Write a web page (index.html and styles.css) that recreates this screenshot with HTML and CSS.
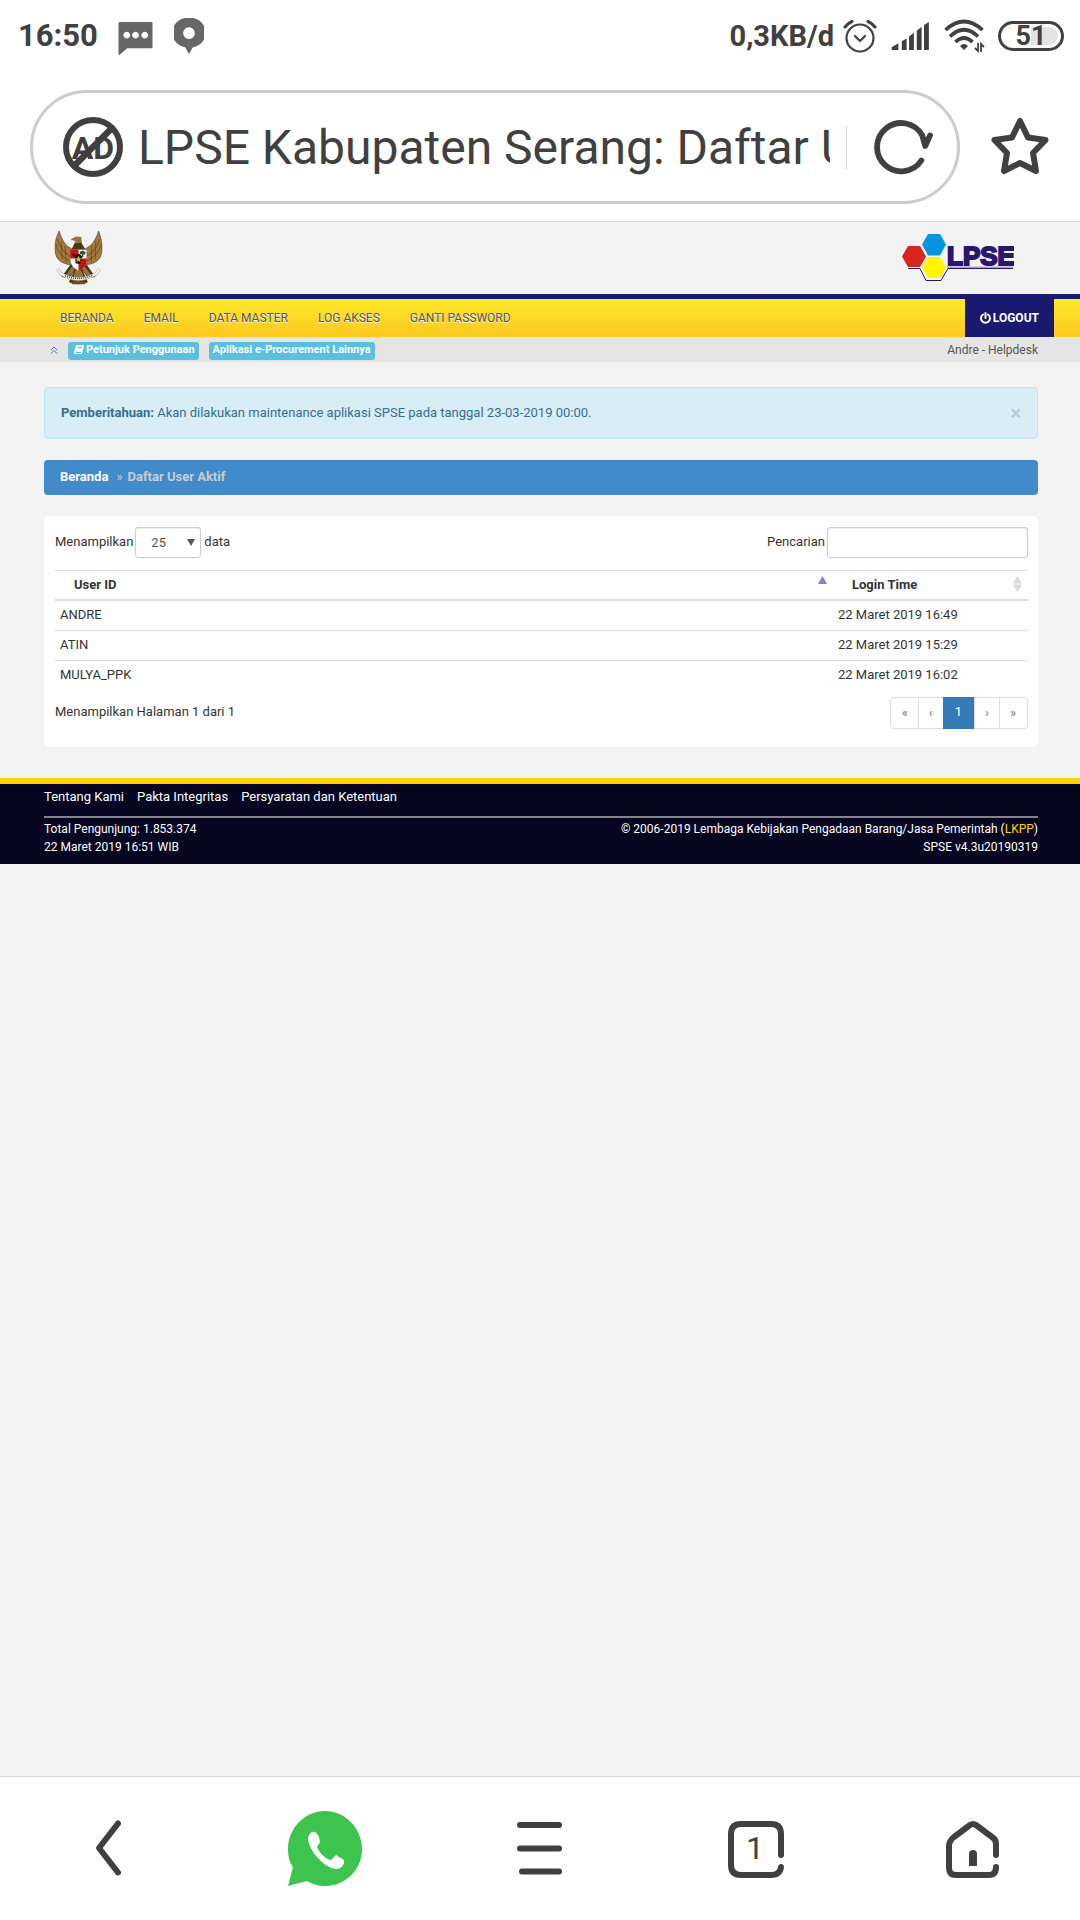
FILE: index.html
```html
<!DOCTYPE html>
<html lang="id">
<head>
<meta charset="utf-8">
<meta name="viewport" content="width=device-width, initial-scale=1">
<title>LPSE Kabupaten Serang: Daftar User Aktif</title>
<link rel="stylesheet" href="styles.css">
</head>
<body>
<div class="status-bar">
  <div class="status-group status-left">
    <span>16:50</span>
    <svg class="message" width="36" height="35" viewBox="0 0 36 36" fill="#666"><path fill-rule="evenodd" d="M2 1H34Q35 1 35 2V27Q35 28 34 28H9L1 35Q0 35 0 34V2Q0 1 2 1ZM8.500 11a3.500 3.500 0 1 0 .01 0ZM17.500 11a3.500 3.500 0 1 0 .01 0ZM27 11a3.500 3.500 0 1 0 .01 0Z"/></svg>
    <svg width="30" height="36" viewBox="0 0 30 37" fill="#666"><path fill-rule="evenodd" d="M15 0A15 15 0 0 1 19 30L15 37L11 30A15 15 0 0 1 15 0ZM15 9.500a6 6 0 1 0 .01 0Z"/></svg>
  </div>
  <div class="status-group status-right">
    <span>0,3KB/d</span>
    <svg width="34" height="34" viewBox="0 0 34 34" fill="none" stroke="#404040" stroke-width="2.200" stroke-linecap="round" stroke-linejoin="round"><circle cx="17" cy="19" r="13.500"/><path d="M12 17l5 5 5-5"/><path stroke-width="3" d="M2 8Q5 4 9 2.500M25 2.500Q29 4 32 8"/></svg>
    <svg class="signal" width="39" height="29" viewBox="0 0 39 30" fill="#404040"><path d="M0 29V26L7 22V29ZM10.500 29V20L15.500 17V29ZM18 29V15L23 11V29ZM26 29V9L31 5V29ZM33.500 29V3L38.500 0V29Z"/></svg>
    <svg class="wifi" width="41" height="34" viewBox="0 0 41 34" fill="none" stroke="#404040" stroke-width="3.600"><path d="M1.500 11Q20 -6 38.500 11M6 17.500Q20 4 34 17.500M11.500 23Q20 15 28.500 23"/><path fill="#404040" stroke="none" d="M16 27Q20 23 24 27L20 31Z"/><path stroke-width="1.800" d="M34 24V32L31 29M37 33V25L40 28"/></svg>
    <span class="battery">51</span>
  </div>
</div>

<div class="browser-bar">
  <div class="address">
    <svg width="60" height="60" viewBox="0 0 60 60" fill="none" stroke="#404040"><circle cx="30" cy="30" r="27" stroke-width="6"/><path stroke-width="6.500" d="M11 49L49 11"/><text x="30" y="42" text-anchor="middle" class="ad-text">AD</text></svg>
    <span class="address-title">LPSE Kabupaten Serang: Daftar User Aktif</span>
    <button class="icon-button reload" type="button" aria-label="Muat ulang"><svg width="60" height="56" viewBox="0 0 60 58" fill="none" stroke="#404040" stroke-width="6" stroke-linecap="round" stroke-linejoin="round"><path d="M49 43A25 25 0 1 1 50 17L53 28L58 17"/></svg></button>
  </div>
  <button class="icon-button" type="button" aria-label="Favorit"><svg width="60" height="60" viewBox="0 0 60 60" fill="none" stroke="#404040" stroke-width="6" stroke-linecap="round" stroke-linejoin="round"><path d="M30 4L38 20.500L55.500 23L43 36L46 54L30 46L14 54L17 36L4.500 23L22 20.500Z"/></svg></button>
</div>

<div class="site">
  <header class="site-header">
    <svg width="49" height="55" viewBox="158 44 142 164" preserveAspectRatio="none">
      <g fill="#a57c3c" stroke="#5b4320" stroke-width="2">
        <path d="M173 47C164 65 159 86 162 110C164 132 180 145 205 147L209 100C193 92 180 75 173 47Z"/>
        <path d="M287 47C294 65 299 86 296 110C294 132 278 145 253 147L249 100C265 92 280 75 287 47Z"/>
      </g>
      <path fill="none" stroke="#54401f" stroke-width="2" d="M168 70Q175 105 205 122M164 85Q169 120 205 136M179 78L182 131M190 91L193 139M290 70Q283 105 253 122M294 85Q289 120 253 136M279 78L277 131M268 91L266 139"/>
      <path fill="#4b3719" d="M208 104L218 83L236 80L250 104ZM207 145L180 184L204 187L217 164L201 200L230 206L256 200L241 164L255 187L278 184L251 145Z"/>
      <path fill="#94733e" d="M216 82C223 80 219 74 207 75Q207 69 214 68Q218 60 237 65L239 82ZM211 152L192 180L205 180L218 160ZM247 152L266 180L253 180L240 160ZM220 165L211 194L229 199L247 194L237 165Z"/>
      <path fill="#fff" stroke="#555" d="M205 102H253V135Q250 156 229 166Q208 156 205 135Z"/>
      <path fill="#c4120f" d="M205 102H229V129H205ZM229 129H253V135Q250 156 229 166Z"/>
      <path fill="#1d1714" d="M207 114L222 119L229 114L240 122L234 146L220 143V127Z"/>
      <path fill="#255b2c" d="M233 109l8-4 9 5-2 8-5-2v9h-4v-9l-6 1z"/>
      <path fill="#e4b441" d="M229 121l3 7 7 1-6 4 2 7-6-4-6 4 2-7-6-4 7-1z"/>
      <path fill="none" stroke="#999" stroke-width="9" d="M168 160L177 174Q229 206 281 174L290 160"/>
      <path fill="none" stroke="#f2f0e9" stroke-width="7" d="M168 160L177 174Q229 206 281 174L290 160"/>
      <path fill="none" stroke="#44391f" stroke-width="4" stroke-dasharray="3 3" d="M190 180Q229 197 269 180"/>
      <path fill="#6a4e24" d="M203 198H255L246 206H212Z"/>
    </svg>
    <svg class="lpse-logo" width="112" height="48" viewBox="0 0 112 48">
      <path fill="#d9251c" d="M6 12H18L24 22.500L18 33H6L0 22.500Z"/><path fill="#0795e2" d="M26 0H38L44 10.500L38 21.500H26L20 10.500Z"/><path fill="#fff600" d="M26 23H38L44 33.500L38 44H26L20 33.500Z"/>
      <path fill="none" stroke="#a9a5c8" stroke-width="2" d="M45 33.500H111"/><path fill="none" stroke="#29166f" d="M6 34.500H18L24 46.500H39L46 34.500H111"/>
      <text x="45" y="31" class="logo-text">LPSE</text>
    </svg>
  </header>
  <nav class="main-nav">
    <ul class="menu"><li><a href="#">BERANDA</a></li><li><a href="#">EMAIL</a></li><li><a href="#">DATA MASTER</a></li><li><a href="#">LOG AKSES</a></li><li><a href="#">GANTI PASSWORD</a></li></ul>
    <a class="logout" href="#"><svg width="11" height="12" viewBox="0 0 11 12" fill="none" stroke="#fff" stroke-width="2" stroke-linecap="round"><path d="M3 2.500A4.500 4.500 0 1 0 8 2.500M5.500 1V6"/></svg>LOGOUT</a>
  </nav>
  <div class="sub-nav">
    <a class="collapse" href="#" aria-label="Ciutkan"><svg width="8" height="8" viewBox="0 0 8 8" fill="none" stroke="#337ab7"><path d="M1 4L4 1L7 4M1 7.500L4 4.500L7 7.500"/></svg></a>
    <a class="label" href="#"><svg class="book" width="10" height="9" viewBox="0 0 10 9"><path fill="#fff" d="M3 0H9Q10 0 10 1L8 8Q8 9 7 9H1Q0 9 0 7L2 1Q2 0 3 0Z"/><path stroke="#5bc0de" fill="none" d="M4 2.500H8M1.500 7.500H7"/></svg>Petunjuk Penggunaan</a>
    <a class="label" href="#">Aplikasi e-Procurement Lainnya</a>
    <span class="account">Andre - Helpdesk</span>
  </div>

  <main class="content">
    <div class="alert"><p><strong>Pemberitahuan:</strong> Akan dilakukan maintenance aplikasi SPSE pada tanggal 23-03-2019 00:00.</p><button type="button" class="close" aria-label="Tutup">×</button></div>
    <div class="breadcrumb"><a href="#">Beranda</a><span class="sep">»</span><span>Daftar User Aktif</span></div>
    <section class="card">
      <div class="table-tools">
        <div class="field"><label for="length">Menampilkan</label><span class="select-wrap"><select id="length" aria-label="Jumlah data"><option>10</option><option selected>25</option><option>50</option></select></span><span>data</span></div>
        <div class="field"><label for="search">Pencarian</label><input id="search" type="search"></div>
      </div>
      <table>
        <thead><tr>
          <th scope="col"><div class="th">User ID<svg width="9" height="16" viewBox="0 0 9 16"><path fill="#8080dd" d="M0 8L4.500 0L9 8Z"/></svg></div></th>
          <th scope="col" class="time"><div class="th">Login Time<svg width="9" height="16" viewBox="0 0 9 16"><path fill="#d8d8d8" d="M0 7.500L4.500 0L9 7.500ZM0 8.500H9L4.500 16Z"/></svg></div></th>
        </tr></thead>
        <tbody>
          <tr><td>ANDRE</td><td>22 Maret 2019 16:49</td></tr>
          <tr><td>ATIN</td><td>22 Maret 2019 15:29</td></tr>
          <tr><td>MULYA_PPK</td><td>22 Maret 2019 16:02</td></tr>
        </tbody>
      </table>
      <div class="table-footer">
        <p>Menampilkan Halaman 1 dari 1</p>
        <div class="pagination"><a href="#">«</a><a href="#">‹</a><a class="active" href="#">1</a><a href="#">›</a><a href="#">»</a></div>
      </div>
    </section>
  </main>

  <footer class="site-footer">
    <div class="footer-links"><a href="#">Tentang Kami</a><a href="#">Pakta Integritas</a><a href="#">Persyaratan dan Ketentuan</a></div>
    <div class="footer-info">
      <div>Total Pengunjung: 1.853.374<br>22 Maret 2019 16:51 WIB</div>
      <div class="right">© 2006-2019 Lembaga Kebijakan Pengadaan Barang/Jasa Pemerintah (<a class="lkpp" href="#">LKPP</a>)<br>SPSE v4.3u20190319</div>
    </div>
  </footer>
</div>

<nav class="bottom-bar">
  <button class="icon-button" type="button" aria-label="Kembali"><svg width="78" height="78" viewBox="0 0 78 78" fill="none" stroke="#404040" stroke-width="6" stroke-linecap="round" stroke-linejoin="round"><path d="M48 14.500L29 39L48 63.500"/></svg></button>
  <button class="icon-button" type="button" aria-label="WhatsApp"><svg width="78" height="78" viewBox="0 0 78 78"><path fill="#3dc44e" d="M39 2C59 2 76 19 76 40C76 61 59 77 39 77Q29 77 21 72L2 77L7 58C3 53 2 46 2 40C2 19 19 2 39 2Z"/><path fill="#fff" d="M29 23Q25 22 22 28C21 39 37 59 50 60Q56 60 58 54V51L50 46L45 51C41 51 33 44 31 38L34 33Q33 25 29 23Z"/></svg></button>
  <button class="icon-button" type="button" aria-label="Menu"><svg width="78" height="78" viewBox="0 0 78 78" fill="none" stroke="#404040" stroke-width="6" stroke-linecap="round"><path d="M19 16H58M19 39.500H58M21 62.500H58"/></svg></button>
  <button class="icon-button" type="button" aria-label="Tab"><svg width="78" height="78" viewBox="0 0 78 78" fill="none" stroke="#404040" stroke-width="6" stroke-linecap="round"><path d="M64 46V25Q64 15 54 15H24Q14 15 14 25V56Q14 66 24 66H54Q63 66 64 58"/><text x="38" y="50" text-anchor="middle" class="tab-count">1</text></svg></button>
  <button class="icon-button" type="button" aria-label="Beranda"><svg width="78" height="78" viewBox="0 0 78 78" fill="none" stroke="#404040" stroke-width="6" stroke-linecap="round" stroke-linejoin="round"><path d="M63 46V35Q63 30 59 28L43 16Q40 14 37 16L21 28Q16 32 16 37V59Q16 66 23 66H56Q63 66 63 58"/><path fill="#404040" stroke="none" d="M36 57V45Q36 41 40 41Q44 41 44 45V57Z"/></svg></button>
</nav>
</body>
</html>
```

FILE: styles.css
```css
* { box-sizing: border-box; }
body { margin: 0; min-height: 100vh; display: flex; flex-direction: column; background: #fff; color: #333; font: 13px/18px Roboto, sans-serif; }
a { color: inherit; text-decoration: none; }
p, ul { margin: 0; padding: 0; list-style: none; }
svg { display: block; flex: none; }
button { font: inherit; color: inherit; border: 0; padding: 0; background: none; }

.status-bar { display: flex; justify-content: space-between; height: 72px; padding: 0 16px 0 18px; color: #404040; font-size: 31px; font-weight: 700; line-height: 74px; }
.status-group { display: flex; align-items: center; }
.status-left { gap: 20px; }
.status-right { gap: 9px; font-size: 29px; }
.message { margin-top: 4px; }
.signal { margin-left: 5px; }
.wifi { margin-left: 5px; }
.battery { width: 66px; height: 30px; margin-left: 4px; border: 3px solid #404040; border-radius: 15px; background: linear-gradient(90deg, #fff 50%, #e3e3e3 50%) content-box; padding: 3px; font-size: 27px; line-height: 18px; text-align: center; }

.browser-bar { display: flex; align-items: center; gap: 30px; padding: 18px 30px 17px; border-bottom: 1px solid #d5d5d5; }
.address { flex: 1; min-width: 0; height: 114px; display: flex; align-items: center; border: 3px solid #ccc; border-radius: 57px; padding: 0 24px 0 30px; }
.address-title { flex: 1; min-width: 0; overflow: hidden; white-space: nowrap; margin-left: 15px; padding-top: 2px; color: #404040; font-size: 48px; line-height: 64px; }
.icon-button { display: flex; align-items: center; justify-content: center; }
.reload { height: 43px; margin-left: 16px; padding-left: 26px; border-left: 1px solid #ccc; }
.ad-text { font: 700 32px Roboto, sans-serif; fill: #404040; stroke: none; }

.site { flex: 1; background: #f3f3f3; }
.site-header { display: flex; justify-content: space-between; align-items: flex-start; height: 77px; padding: 8px 66px 0 54px; border-bottom: 5px solid #191970; }
.lpse-logo { margin-top: 4px; }
.logo-text { font: 700 26px "Liberation Sans", sans-serif; fill: #29166f; stroke: #29166f; stroke-width: 2px; }

.main-nav { display: flex; justify-content: space-between; height: 38px; padding: 0 26px 0 45px; background: linear-gradient(#fcea2b, #fdc820); color: #555; font-size: 12px; line-height: 38px; }
.menu { display: flex; }
.menu a { display: block; padding: 0 15px; text-shadow: 0 1px 0 #fff; }
.logout { display: flex; align-items: center; gap: 2px; padding: 0 15px; background: #191970; color: #fff; font-weight: 700; }
.sub-nav { display: flex; align-items: center; height: 25px; padding: 0 42px 0 50px; background: #e5e5e5; }
.label { display: flex; align-items: center; gap: 2px; height: 18px; margin: 3px 0 0 10px; padding: 0 4px 3px; border-radius: 3px; background: #5bc0de; color: #fff; font-size: 11px; font-weight: 700; line-height: 15px; }
.book { margin-left: 2px; }
.account { margin-left: auto; color: #555; font-size: 12px; }

.content { display: grid; gap: 21px; padding: 25px 42px 31px 44px; }
.alert { display: flex; align-items: center; justify-content: space-between; height: 52px; padding: 0 16px; border: 1px solid #bce8f1; border-radius: 4px; background: #d9edf7; color: #31708f; }
.close { color: #b1cedd; font-size: 20px; font-weight: 700; }
.breadcrumb { display: flex; height: 35px; padding: 0 16px; border-radius: 4px; background: #428bca; color: #ccc; font-weight: 700; line-height: 34px; }
.breadcrumb a { color: #fff; }
.sep { margin: 0 5px 0 8px; font-weight: 400; }
.card { padding: 11px 10px 18px 11px; border-radius: 5px; background: #fff; }
.table-tools, .table-footer { display: flex; justify-content: space-between; }
.table-tools { margin-bottom: 12px; }
.field { display: flex; gap: 2px; line-height: 29px; }
.select-wrap { position: relative; margin-right: 1px; }
.select-wrap::after { content: ""; position: absolute; right: 6px; top: 12px; border: 4px solid transparent; border-top: 7px solid #555; border-bottom: 0; pointer-events: none; }
select, input { display: block; appearance: none; height: 31px; border: 1px solid #ccc; border-radius: 3px; background: #fff; box-shadow: inset 0 1px 1px #eee; color: #555; font: inherit; }
select { width: 66px; padding: 0 15px; }
input { width: 201px; padding: 0 8px; }
table { width: 100%; border-collapse: collapse; table-layout: fixed; }
th, td { height: 29px; padding: 5px; border-top: 1px solid #ddd; text-align: left; }
td { height: 30px; }
th { padding: 5px 6px 5px 19px; border-bottom: 2px solid #ddd; }
.time { width: 195px; }
.th { display: flex; justify-content: space-between; }
.table-footer { margin-top: 7px; }
.table-footer p { padding-top: 6px; }
.pagination { display: flex; height: 32px; border: 1px solid #ddd; border-radius: 4px; color: #777; font-size: 13px; line-height: 30px; }
.pagination a { padding: 0 10px; border-left: 1px solid #ddd; }
.pagination a:first-child { padding-left: 11px; border-left: 0; }
.pagination a:last-child { padding-right: 11px; }
.pagination .active { padding: 0 12px; margin: -1px 0; border-left: 0; background: #337ab7; color: #fff; }

.site-footer { padding: 4px 42px 8px 44px; border-top: 6px solid #ffd400; background: #070520; color: #fff; }
.footer-links { display: flex; gap: 13px; height: 30px; border-bottom: 2px solid #83828f; }
.footer-info { display: flex; justify-content: space-between; padding-top: 2px; font-size: 12px; }
.right { text-align: right; }
.lkpp { color: #ffd400; }

.bottom-bar { display: grid; grid-template-columns: repeat(5, 1fr); height: 144px; padding: 0 0 2px 1px; border-top: 1px solid #d5d5d5; }
.tab-count { font: 400 32px Roboto, sans-serif; fill: #404040; stroke: none; }
```
